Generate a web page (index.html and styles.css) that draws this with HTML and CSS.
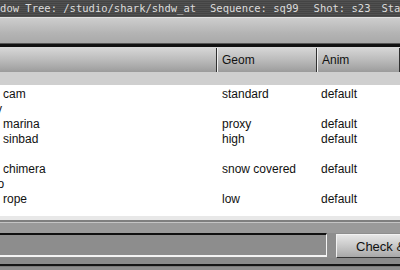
FILE: index.html
```html
<!DOCTYPE html>
<html lang="en">
<head>
  <meta charset="UTF-8">
  <title>Shadow Tree</title>
  <link rel="stylesheet" href="styles.css">
</head>
<body>
  <div class="titlebar">
    <span class="path">Shadow Tree: /studio/shark/shdw_at</span>
    <span class="seq">Sequence: sq99</span>
    <span class="shot">Shot: s23</span>
    <span class="stat">Status</span>
  </div>

  <div class="toolbar"></div>
  <div class="separator"></div>

  <div class="tree">
    <div class="header">
      <div class="hcell">Name</div>
      <div class="hcell">Geom</div>
      <div class="hcell">Anim</div>
    </div>
    <div class="group-row"></div>
    <div class="rows">
      <div class="row"><span>cam</span><span>standard</span><span>default</span></div>
      <div class="row"><span class="clip clip-y">y</span><span></span><span></span></div>
      <div class="row"><span>marina</span><span>proxy</span><span>default</span></div>
      <div class="row"><span>sinbad</span><span>high</span><span>default</span></div>
      <div class="row"><span></span><span></span><span></span></div>
      <div class="row"><span>chimera</span><span>snow covered</span><span>default</span></div>
      <div class="row"><span class="clip clip-o">o</span><span></span><span></span></div>
      <div class="row"><span>rope</span><span>low</span><span>default</span></div>
    </div>
  </div>

  <div class="bottom">
    <div class="bottom-row">
      <div class="field"></div>
      <button class="check-btn">Check &amp; Save</button>
    </div>
    <div class="bottom-strip"></div>
  </div>
</body>
</html>
```

FILE: styles.css
```css
body {
  margin: 0;
  width: 400px;
  height: 270px;
  overflow: hidden;
  background: #8e8e8e;
  font-family: "Liberation Sans", Arial, sans-serif;
}

.titlebar {
  height: 17px;
  background: repeating-linear-gradient(180deg, #505050 0, #505050 1px, #444 1px, #444 2px);
  color: #dcdcdc;
  font-family: "DejaVu Sans Mono", monospace;
  font-size: 10.5px;
  line-height: 17px;
  white-space: nowrap;
  overflow: hidden;
  display: flex;
}

.path {
  margin-left: -18.9px;
}

.seq {
  margin-left: 14px;
}

.shot {
  margin-left: 15px;
}

.stat {
  margin-left: 11px;
}

.toolbar {
  height: 25px;
  border-top: 1px solid #e2e2e2;
  background: linear-gradient(180deg, #cdcdcd, #b4b4b4 60%, #a9a9a9);
}

.separator {
  height: 3px;
  background: #111;
  border-top: 1px solid #555;
  border-bottom: 1px solid #d8d8d8;
}

.tree {
  background: #fff;
}

.header {
  display: grid;
  grid-template-columns: 217px 100px 1fr;
  height: 23px;
  border-bottom: 1px solid #444;
}

.hcell {
  background: linear-gradient(180deg, #d6d6d6, #b8b8b8 55%, #9c9c9c);
  border-left: 1px solid #f0f0f0;
  border-right: 1px solid #303030;
  font-size: 12px;
  line-height: 24px;
  padding-left: 4px;
  color: #111;
}

.hcell:first-child {
  color: transparent;
  border-left: none;
}

.group-row {
  height: 13px;
  background: #cfcfcf;
}

.rows {
  height: 131px;
  padding-top: 1px;
  box-sizing: border-box;
}

.row {
  display: grid;
  grid-template-columns: 222px 99px 1fr;
  height: 15px;
  font-size: 12px;
  line-height: 16px;
  color: #111;
  overflow: hidden;
}

.row span:first-child {
  padding-left: 3px;
  overflow: hidden;
  white-space: nowrap;
}

.row span.clip {
  padding-left: 0;
}

.row span.clip-y {
  text-indent: -4px;
}

.row span.clip-o {
  text-indent: -2.5px;
}

.bottom {
  border-top: 4px solid #e8e8e8;
  height: 50px;
  box-sizing: border-box;
  padding-top: 13px;
  background: linear-gradient(180deg, #7f7f7f 0, #7f7f7f 2px, #c4c4c4 2px, #c4c4c4 3px, #9a9a9a 3px, #9a9a9a 13px, #8e8e8e 13px);
}

.bottom-row {
  display: flex;
  align-items: flex-start;
  gap: 9px;
  overflow: hidden;
}

.field {
  flex-shrink: 0;
  width: 326px;
  height: 20px;
  background: #8d8d8d;
  border-top: 2px solid #101010;
  border-right: 1px solid #f4f4f4;
  border-bottom: 2px solid #f4f4f4;
}

.check-btn {
  flex-shrink: 0;
  height: 24px;
  width: 90px;
  margin-top: 1px;
  padding: 0 0 0 19px;
  text-align: left;
  font-family: "Liberation Sans", Arial, sans-serif;
  font-size: 13px;
  color: #111;
  background: linear-gradient(180deg, #e6e6e6, #c8c8c8 50%, #a8a8a8);
  border: 1px solid #333;
  border-top-color: #f2f2f2;
  border-left-color: #f2f2f2;
  white-space: nowrap;
}

.bottom-strip {
  height: 9px;
  background: linear-gradient(180deg, #8a8a8a 0, #8a8a8a 6px, #151515 6px, #151515 8px, #7a7a7a 8px);
}
```
